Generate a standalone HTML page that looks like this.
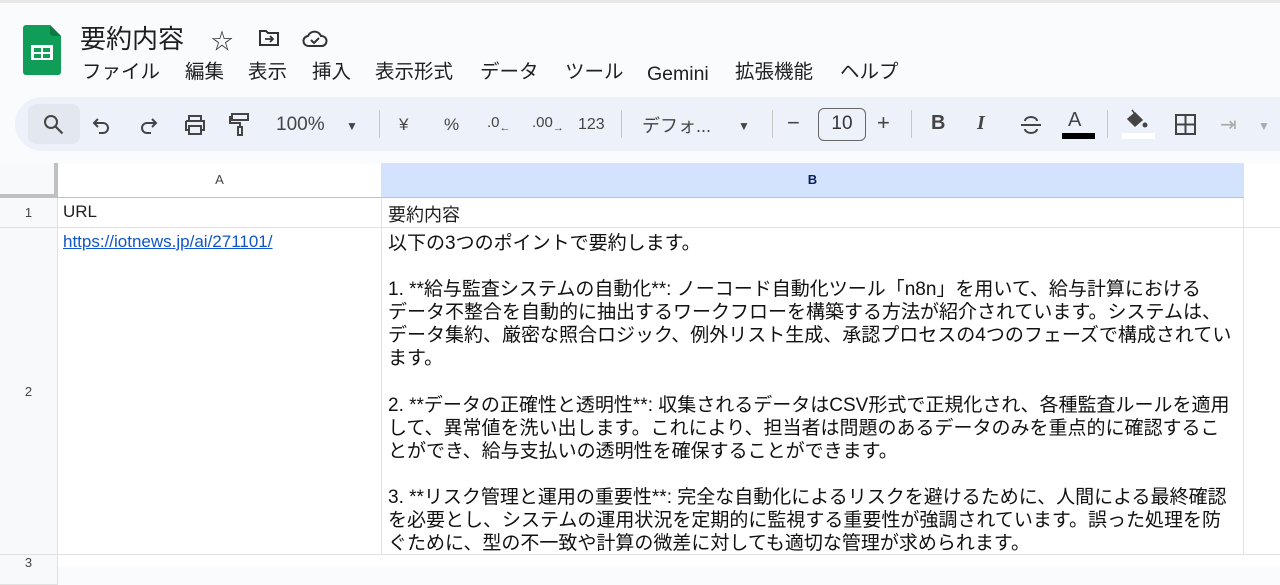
<!DOCTYPE html>
<html><head><meta charset="utf-8"><style>
*{margin:0;padding:0;box-sizing:border-box}
body{width:1280px;height:567px;overflow:hidden;background:#f9fbfd;font-family:"Liberation Sans","Noto Sans CJK JP",sans-serif;color:#1f1f1f;position:relative}
.abs{position:absolute}
.m{position:absolute;top:59px;font-size:19.5px;line-height:26px;white-space:nowrap}
.tb{position:absolute;left:15px;top:97px;width:1300px;height:54px;background:#edf2fa;border-radius:27px}
.ic{position:absolute;top:112px;font-size:20px;color:#444}
.sep{position:absolute;top:110px;width:1px;height:28px;background:#c7c7c7}
.grid{position:absolute;left:0;top:163px;width:1280px;height:404px;background:#fff}
.cell{position:absolute;border-right:1px solid #e1e1e1;border-bottom:1px solid #e1e1e1;font-size:17px}
.txt{position:absolute;left:388px;top:232px;font-size:19px;line-height:23.1px;width:860px;color:#111;white-space:nowrap}
</style></head><body>
<div class="abs" style="left:0;top:0;width:1280px;height:3px;background:#e8e8e8"></div>
<svg class="abs" style="left:23px;top:25px" width="38" height="50" viewBox="0 0 38 50"><path d="M3 0h24l11 11v36a3 3 0 0 1-3 3H3a3 3 0 0 1-3-3V3a3 3 0 0 1 3-3z" fill="#0f9d58"/><path d="M27 0l11 11H30a3 3 0 0 1-3-3z" fill="#0b7a43"/><rect x="8" y="20" width="22" height="15" fill="#fff"/><rect x="11" y="23" width="7" height="4" fill="#0f9d58"/><rect x="20" y="23" width="7" height="4" fill="#0f9d58"/><rect x="11" y="29" width="7" height="4" fill="#0f9d58"/><rect x="20" y="29" width="7" height="4" fill="#0f9d58"/></svg>
<div class="abs" style="left:80px;top:19px;font-size:26px">要約内容</div>
<div class="abs" style="left:211px;top:24px;font-size:22px;color:#333">☆</div>
<svg class="abs" style="left:258px;top:29px" width="22" height="18" viewBox="0 0 22 18"><path d="M2 2h6l2 2h10v12H2z" fill="none" stroke="#333" stroke-width="2"/><path d="M7 10h8m-3-3l3 3-3 3" fill="none" stroke="#333" stroke-width="1.8"/></svg>
<svg class="abs" style="left:302px;top:28px" width="26" height="20" viewBox="0 0 26 20"><path d="M7 18a5 5 0 0 1-1-10 7 7 0 0 1 13 0 5 5 0 0 1 1 10z" fill="none" stroke="#333" stroke-width="2"/><path d="M9 12l3 3 5-5" fill="none" stroke="#333" stroke-width="2"/></svg>
<div class="m" style="left:82px">ファイル</div>
<div class="m" style="left:185px">編集</div>
<div class="m" style="left:248px">表示</div>
<div class="m" style="left:312px">挿入</div>
<div class="m" style="left:375px">表示形式</div>
<div class="m" style="left:480px">データ</div>
<div class="m" style="left:565px">ツール</div>
<div class="m" style="left:647px;top:61px">Gemini</div>
<div class="m" style="left:735px">拡張機能</div>
<div class="m" style="left:840px">ヘルプ</div>
<div class="tb"></div>
<div class="abs" style="left:28px;top:104px;width:52px;height:40px;background:#e3e8f0;border-radius:8px"></div>
<svg class="abs" style="left:43px;top:114px" width="22" height="22"><circle cx="8" cy="8" r="6" fill="none" stroke="#444" stroke-width="2"/><path d="M12.5 12.5l7 7" stroke="#444" stroke-width="2.2"/></svg>
<svg class="abs" style="left:92px;top:116px" width="20" height="18"><path d="M6 3L2 7l4 4M2 7h9a5 5 0 0 1 0 10H7" fill="none" stroke="#444" stroke-width="2"/></svg>
<svg class="abs" style="left:138px;top:116px" width="20" height="18"><path d="M14 3l4 4-4 4M18 7H9a5 5 0 0 0 0 10h4" fill="none" stroke="#444" stroke-width="2"/></svg>
<svg class="abs" style="left:183px;top:114px" width="24" height="22"><path d="M6 6V2h12v4M3 7h18v9h-3M6 16H3V7M6 12h12v8H6z" fill="none" stroke="#444" stroke-width="2"/></svg>
<svg class="abs" style="left:229px;top:112px" width="22" height="24"><rect x="3" y="2" width="16" height="6" fill="none" stroke="#444" stroke-width="2"/><path d="M3 5H1v6h10v4" fill="none" stroke="#444" stroke-width="2"/><rect x="9" y="15" width="4" height="8" fill="none" stroke="#444" stroke-width="2"/></svg>
<div class="ic" style="left:276px;font-size:19px;top:114px">100%</div>
<div class="ic" style="left:346px;font-size:12px;top:119px">▼</div>
<div class="sep" style="left:379px"></div>
<div class="ic" style="left:399px;font-size:17px;top:115px">¥</div>
<div class="ic" style="left:444px;font-size:17px;top:115px">%</div>
<div class="ic" style="left:487px;font-size:15px;top:114px">.0<sub style="font-size:11px">←</sub></div>
<div class="ic" style="left:532px;font-size:15px;top:114px">.00<sub style="font-size:11px">→</sub></div>
<div class="ic" style="left:578px;font-size:16px;top:116px">123</div>
<div class="sep" style="left:621px"></div>
<div class="ic" style="left:642px;font-size:18px">デフォ...</div>
<div class="ic" style="left:738px;font-size:12px;top:119px">▼</div>
<div class="sep" style="left:772px"></div>
<div class="ic" style="left:787px;font-size:22px;top:110px">−</div>
<div class="abs" style="left:818px;top:108px;width:48px;height:33px;border:1.5px solid #666;border-radius:6px;font-size:19px;text-align:center;line-height:30px;color:#333">10</div>
<div class="ic" style="left:877px;font-size:22px;top:110px">+</div>
<div class="sep" style="left:911px"></div>
<div class="ic" style="left:931px;font-weight:bold">B</div>
<div class="ic" style="left:977px;font-style:italic;font-weight:bold;font-family:'Liberation Serif',serif">I</div>
<svg class="abs" style="left:1019px;top:114px" width="24" height="22"><path d="M6 7a6 4 0 0 1 12 0M6 15a6 4 0 0 0 12 0M2 11h20" fill="none" stroke="#444" stroke-width="2"/></svg>
<div class="ic" style="left:1068px;top:109px">A</div>
<div class="abs" style="left:1062px;top:133px;width:33px;height:6px;background:#000"></div>
<div class="sep" style="left:1107px"></div>
<svg class="abs" style="left:1124px;top:108px" width="26" height="24"><path d="M8 2l3 4M4 11l7-6 7 7-7 6z" fill="#444" stroke="#444" stroke-width="1.5"/><circle cx="21" cy="17" r="2.5" fill="#444"/></svg>
<div class="abs" style="left:1122px;top:133px;width:33px;height:6px;background:#fff"></div>
<svg class="abs" style="left:1175px;top:114px" width="21" height="21"><rect x="1" y="1" width="19" height="19" fill="none" stroke="#444" stroke-width="2"/><path d="M10.5 1v19M1 10.5h19" stroke="#444" stroke-width="2"/></svg>
<div class="ic" style="left:1220px;color:#aaa">⇥</div>
<div class="ic" style="left:1258px;font-size:12px;top:119px;color:#aaa">▼</div>
<div class="grid">
<div class="cell" style="left:0;top:0;width:58px;height:35px;background:#f8f9fa;border-right:4px solid #c0c0c0;border-bottom:4px solid #c0c0c0"></div>
<div class="cell" style="left:58px;top:0;width:324px;height:35px;background:#fff;text-align:center;font-size:13px;line-height:34px;color:#444;border-bottom:1px solid #c0c0c0">A</div>
<div class="cell" style="left:382px;top:0;width:862px;height:35px;background:#d3e3fd;text-align:center;font-size:13px;line-height:34px;font-weight:bold;color:#0b1f5c;border-bottom:1px solid #c0c0c0">B</div>
<div class="cell" style="left:0;top:35px;width:58px;height:30px;background:#f8f9fa;text-align:center;font-size:13px;line-height:30px;color:#444">1</div>
<div class="cell" style="left:0;top:65px;width:58px;height:327px;background:#f8f9fa;text-align:center;font-size:13px;line-height:327px;color:#444">2</div>
<div class="cell" style="left:0;top:392px;width:58px;height:30px;background:#f8f9fa;text-align:center;font-size:13px;color:#444">3</div>
<div class="cell" style="left:58px;top:35px;width:324px;height:30px;padding:4px 5px">URL</div>
<div class="cell" style="left:382px;top:35px;width:862px;height:30px;padding:3px 6px;font-size:18px">要約内容</div>
<div class="cell" style="left:58px;top:65px;width:324px;height:327px;padding:4px 5px;color:#1155cc;text-decoration:underline">https://iotnews.jp/ai/271101/</div>
<div class="cell" style="left:382px;top:65px;width:862px;height:327px"></div>
<div class="cell" style="left:1244px;top:35px;width:40px;height:30px"></div>
<div class="cell" style="left:1244px;top:65px;width:40px;height:327px"></div>
</div>
<div class="txt">以下の3つのポイントで要約します。<br><br>1. **給与監査システムの自動化**: ノーコード自動化ツール「n8n」を用いて、給与計算における<br>データ不整合を自動的に抽出するワークフローを構築する方法が紹介されています。システムは、<br>データ集約、厳密な照合ロジック、例外リスト生成、承認プロセスの4つのフェーズで構成されてい<br>ます。<br><br>2. **データの正確性と透明性**: 収集されるデータはCSV形式で正規化され、各種監査ルールを適用<br>して、異常値を洗い出します。これにより、担当者は問題のあるデータのみを重点的に確認するこ<br>とができ、給与支払いの透明性を確保することができます。<br><br>3. **リスク管理と運用の重要性**: 完全な自動化によるリスクを避けるために、人間による最終確認<br>を必要とし、システムの運用状況を定期的に監視する重要性が強調されています。誤った処理を防<br>ぐために、型の不一致や計算の微差に対しても適切な管理が求められます。</div>
</body></html>
